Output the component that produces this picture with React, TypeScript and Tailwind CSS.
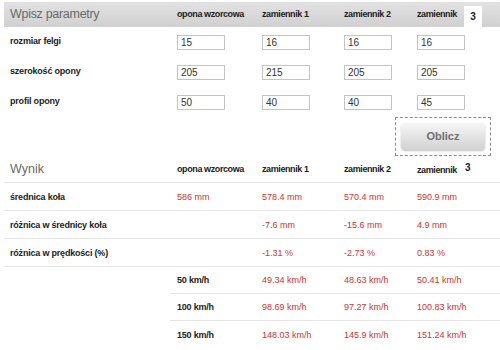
const inputs = [
  { label: "rozmiar felgi", values: ["15", "16", "16", "16"] },
  { label: "szerokość opony", values: ["205", "215", "205", "205"] },
  { label: "profil opony", values: ["50", "40", "40", "45"] },
];

const results = [
  { label: "średnica koła", values: ["586 mm", "578.4 mm", "570.4 mm", "590.9 mm"] },
  { label: "różnica w średnicy koła", values: ["", "-7.6 mm", "-15.6 mm", "4.9 mm"] },
  { label: "różnica w prędkości (%)", values: ["", "-1.31 %", "-2.73 %", "0.83 %"] },
];

const speeds = [
  { label: "50 km/h", values: ["49.34 km/h", "48.63 km/h", "50.41 km/h"] },
  { label: "100 km/h", values: ["98.69 km/h", "97.27 km/h", "100.83 km/h"] },
  { label: "150 km/h", values: ["148.03 km/h", "145.9 km/h", "151.24 km/h"] },
];

const cols = "grid grid-cols-[166px_85px_82px_73px_1fr]";

export default function App() {
  return (
    <div
      className="w-[500px] h-[350px] bg-white overflow-hidden pt-[2px] pl-[4px] text-[#222]"
      style={{ fontFamily: '"Liberation Sans", Arial, sans-serif' }}
    >
      {/* Parametry */}
      <div className={`${cols} h-[25px] items-center bg-gradient-to-b from-[#e2e2e2] to-[#d0d0d0]`}>
        <div className="pl-[6px] text-[12.5px] text-[#6a6a6a] tracking-[-0.3px]">Wpisz parametry</div>
        <div className="pl-[7px] text-[9px] font-bold tracking-[-0.4px]">opona wzorcowa</div>
        <div className="pl-[7px] text-[9px] font-bold tracking-[-0.4px]">zamiennik 1</div>
        <div className="pl-[7px] text-[9px] font-bold tracking-[-0.4px]">zamiennik 2</div>
        <div className="pl-[7px] h-full flex items-center text-[9px] font-bold tracking-[-0.4px]">
          zamiennik
          <span className="ml-[7px] mt-[4px] h-[21px] w-[18px] bg-white flex items-center justify-center text-[10px] tracking-normal">
            3
          </span>
        </div>
      </div>

      {inputs.map((row) => (
        <div key={row.label} className={`${cols} h-[30px] items-center`}>
          <div className="pl-[6px] text-[9px] font-bold tracking-[-0.2px]">{row.label}</div>
          {row.values.map((v, i) => (
            <div key={i} className="pl-[7px]">
              <div className="w-[48px] h-[15px] border border-[#c4c4c4] pl-[3px] text-[10px] leading-[13px] text-[#333]">
                {v}
              </div>
            </div>
          ))}
        </div>
      ))}

      <div className="flex justify-end pr-[9px] h-[39px]">
        <div className="w-[96px] h-[39px] border border-dashed border-[#8a8a8a] p-[5px]">
          <button className="w-full h-[27px] rounded-[4px] bg-gradient-to-b from-[#f6f6f6] to-[#d2d2d2] shadow-[0_1px_2px_rgba(0,0,0,0.25)] text-[11px] font-bold text-[#707070]">
            Oblicz
          </button>
        </div>
      </div>

      {/* Wynik */}
      <div className={`${cols} h-[27px] items-center pt-[1px] border-b border-[#e6e6e6]`}>
        <div className="pl-[6px] text-[12.5px] text-[#6a6a6a]">Wynik</div>
        <div className="pl-[7px] text-[9px] font-bold tracking-[-0.4px]">opona wzorcowa</div>
        <div className="pl-[7px] text-[9px] font-bold tracking-[-0.4px]">zamiennik 1</div>
        <div className="pl-[7px] text-[9px] font-bold tracking-[-0.4px]">zamiennik 2</div>
        <div className="pl-[7px] text-[9px] font-bold tracking-[-0.4px]">
          zamiennik<span className="ml-[8px] relative -top-[2px] text-[10px]">3</span>
        </div>
      </div>

      {results.map((row) => (
        <div key={row.label} className={`${cols} h-[28px] items-center pt-[2px] border-b border-[#e6e6e6]`}>
          <div className="pl-[6px] text-[9px] font-bold tracking-[-0.2px]">{row.label}</div>
          {row.values.map((v, i) => (
            <div key={i} className="pl-[7px] text-[9px] text-[#c9362f]">
              {v}
            </div>
          ))}
        </div>
      ))}

      {speeds.map((row, idx) => (
        <div key={row.label} className={`${cols} h-[27px]`}>
          <div />
          <div
            className={`col-span-4 grid grid-cols-[85px_82px_73px_1fr] items-center pt-[2px] ${
              idx < speeds.length - 1 ? "border-b border-[#e6e6e6]" : ""
            }`}
          >
            <div className="pl-[7px] text-[9px] font-bold tracking-[-0.2px]">{row.label}</div>
            {row.values.map((v, i) => (
              <div key={i} className="pl-[7px] text-[9px] text-[#c9362f]">
                {v}
              </div>
            ))}
          </div>
        </div>
      ))}
    </div>
  );
}
